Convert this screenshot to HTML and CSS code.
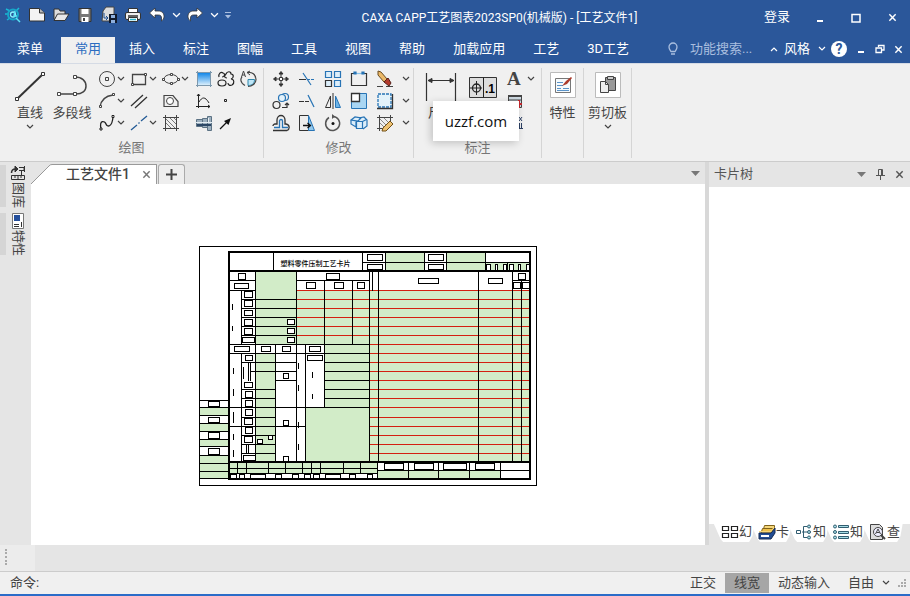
FILE: index.html
```html
<!DOCTYPE html>
<html lang="zh-CN">
  <head>
    <meta charset="UTF-8" />
    <title>CAXA CAPP工艺图表2023SP0(机械版)</title>
    <link rel="stylesheet" href="styles.css">
  </head>
  <body>
    <svg class="defs" aria-hidden="true">
      <symbol id="chev" viewBox="0 0 8 8"><path d="M1 2l3 3 3-3" fill="none" stroke="currentColor" stroke-width="1.200" /></symbol>
      <symbol id="cross" viewBox="0 0 10 10"><path d="M1.500 1.500l7 7M8.500 1.500l-7 7" fill="none" stroke="currentColor" stroke-width="1.600" /></symbol>
    </svg>

    <!-- Title bar -->
    <header class="titlebar">
      <div class="quick">
        <button class="q" aria-label="CAXA"><svg width="18" height="18" viewBox="0 0 18 18" fill="none"><path d="M2 3l4 2M1 8l3 0M3 14l3-2M15 2l-3 3" stroke="#19b9d6" stroke-width="1.500" /><circle cx="9" cy="8.500" r="5" stroke="#17a7c9" stroke-width="2" /><circle cx="9" cy="8.500" r="2.500" stroke="#8af4ff" stroke-width="1.300" /><path d="M12 12l4 4M11 5l-1 5 3 0" stroke="#5be3f5" stroke-width="1.500" /></svg></button>
        <button class="q" aria-label="新建"><svg width="18" height="18" viewBox="0 0 18 18"><path d="M1.500 2.500h10l5 4.500v8h-15z" fill="#f4f4f4" stroke="#333" /><path d="M11.500 2.500v4.500h5" fill="#bbb" stroke="#333" /></svg></button>
        <button class="q" aria-label="打开"><svg width="18" height="18" viewBox="0 0 18 18"><path d="M2 13V3h5l1 2h5v3" fill="#ddd" stroke="#333" /><path d="M2 14.500L5.500 8H17l-4 6.500z" fill="#e8e8e8" stroke="#333" /></svg></button>
        <button class="q" aria-label="保存"><svg width="18" height="18" viewBox="0 0 18 18"><path d="M3 2.500h12v13H3z" fill="#777" stroke="#333" /><path d="M5.500 3h7v5h-7zM5.500 11h7v5h-7z" fill="#fff" /><path d="M7 12h2v3H7z" fill="#444" /></svg></button>
        <button class="q" aria-label="另存为"><svg width="18" height="18" viewBox="0 0 18 18"><path d="M3 5l3-4h8v14H2z" fill="#ddd" stroke="#444" /><path d="M4 7v5h4M6 10l2 2-2 2" fill="none" stroke="#1d4e91" /><path d="M9 8h8v9H9z" fill="#101a2c" /><path d="M11 9h4v3h-4zM11 14h4v3h-4z" fill="#8fb0dd" /></svg></button>
        <button class="q" aria-label="打印"><svg width="18" height="18" viewBox="0 0 18 18"><path d="M4.500 7V2.500h9V7" fill="#fff" stroke="#333" /><rect x="1.500" y="6.500" width="15" height="7" rx="1.500" fill="#eee" stroke="#333" /><path d="M4 10h10" stroke="#333" stroke-width="1.500" /><path d="M4.500 11.500h9v4h-9z" fill="#fff" stroke="#333" /><path d="M6 13.500h6" stroke="#27b3c9" stroke-width="1.500" /></svg></button>
        <button class="q" aria-label="撤销"><svg width="18" height="18" viewBox="0 0 18 18"><path d="M1.500 7L7 2v3h3c4 0 6 2 6 5.500 0 2-1 3.500-2.500 4.500V12c0-2-1-3-3-3H7v3z" fill="#fff" stroke="#333" stroke-width=".8" /></svg></button>
        <button class="drop" aria-label="撤销列表"><svg width="9" height="9"><use href="#chev" /></svg></button>
        <button class="q" aria-label="重做"><svg width="18" height="18" viewBox="0 0 18 18"><path d="M16.500 7L11 2v3H8C4 5 2 7 2 10.500c0 2 1 3.500 2.500 4.500V12c0-2 1-3 3-3H11v3z" fill="#fff" stroke="#333" stroke-width=".8" /></svg></button>
        <button class="drop" aria-label="重做列表"><svg width="9" height="9"><use href="#chev" /></svg></button>
        <button class="drop dim" aria-label="自定义"><svg width="8" height="8" viewBox="0 0 8 8"><path d="M1 1.500h6" stroke="currentColor" /><path d="M1 4h6L4 7.500z" fill="currentColor" /></svg></button>
      </div>
      <h1>CAXA CAPP工艺图表2023SP0(机械版) - [工艺文件1]</h1>
      <div class="window-buttons">
        <button class="login">登录</button>
        <button class="win" aria-label="最小化"><svg width="10" height="10"><path d="M2 8h6" stroke="#fff" stroke-width="2" /></svg></button>
        <button class="win" aria-label="最大化"><svg width="10" height="10"><path d="M1 1.500h8v7.500H1z" fill="none" stroke="#fff" stroke-width="1.500" /></svg></button>
        <button class="win" aria-label="关闭"><svg width="9" height="9"><use href="#cross" /></svg></button>
      </div>
    </header>

    <!-- Ribbon tabs -->
    <nav class="menu">
      <button class="first">菜单</button>
      <button class="active">常用</button>
      <button>插入</button>
      <button>标注</button>
      <button>图幅</button>
      <button>工具</button>
      <button>视图</button>
      <button>帮助</button>
      <button>加载应用</button>
      <button>工艺</button>
      <button>3D工艺</button>
      <div class="menu-right">
        <label class="bulb" for="search"><svg width="12" height="14" viewBox="0 0 12 14" fill="none" stroke="#a9bedf" stroke-width="1.300"><path d="M4 9.500C3 8 2 7 2 5a4 4 0 0 1 8 0c0 2-1 3-2 4.500zM4 12h4" /></svg></label>
        <input id="search" type="text" placeholder="功能搜索..." aria-label="功能搜索" />
        <button class="mini" aria-label="收起"><svg class="up" width="8" height="8"><use href="#chev" /></svg></button>
        <button class="style-btn">风格 <svg width="8" height="8"><use href="#chev" /></svg></button>
        <button class="help" aria-label="帮助">?</button>
        <button class="mini" aria-label="最小化"><svg width="10" height="10"><path d="M2 8h6" stroke="#fff" stroke-width="2" /></svg></button>
        <button class="mini" aria-label="还原"><svg width="10" height="10" fill="none" stroke="#fff" stroke-width="1.300"><path d="M3.500 3V1.500H9V6H7M1 4h5.500v4.500H1z" /></svg></button>
        <button class="mini" aria-label="关闭"><svg width="9" height="9"><use href="#cross" /></svg></button>
      </div>
    </nav>

    <!-- Ribbon -->
    <section class="ribbon">
      <div class="group draw">
        <div class="tools">
          <button class="big"><svg width="34" height="36" viewBox="0 0 34 36"><path d="M4 31L30 6" stroke="#333" stroke-width="2" /><path d="M2.500 29.500h3v3h-3zM28.500 4.500h3v3h-3z" fill="#fff" stroke="#333" /></svg><span>直线</span><svg width="8" height="8"><use href="#chev" /></svg></button>
          <button class="big poly"><svg width="34" height="36" viewBox="0 0 34 36" fill="none" stroke="#444" stroke-width="1.500"><path d="M4 26h17c6 0 10-3 10-8s-4-9-11-9" /><path d="M2.500 24.500h3v3h-3zM18.500 24.500h3v3h-3zM18.500 7.500h3v3h-3z" fill="#fff" stroke-width="1" /></svg><span>多段线</span></button>
          <div class="icons draw-icons">
            <button aria-label="圆"><svg width="18" height="18" viewBox="0 0 18 18" fill="none" stroke="#444"><circle cx="9" cy="9" r="7.500" /><path d="M7.500 7.500h3v3h-3z" /></svg><svg width="8" height="8"><use href="#chev" /></svg></button>
            <button aria-label="矩形"><svg width="18" height="18" viewBox="0 0 18 18" fill="none" stroke="#444"><path d="M2.500 4.500h13v10h-13z" stroke-width="1.300" /><path d="M1.500 13.500h2v2h-2zM14.500 3.500h2v2h-2z" fill="#fff" /></svg><svg width="8" height="8"><use href="#chev" /></svg></button>
            <button aria-label="椭圆"><svg width="18" height="18" viewBox="0 0 18 18" fill="none" stroke="#444"><ellipse cx="9" cy="9" rx="7" ry="4.500" /><path d="M.5 8.500h2v2h-2zM15.500 8.500h2v2h-2zM8.500 3.500h2v2h-2zM8.500 12.500h2v2h-2z" fill="#fff" /></svg><svg width="8" height="8"><use href="#chev" /></svg></button>
            <button aria-label="填充"><svg width="18" height="18" viewBox="0 0 18 18"><defs><linearGradient id="fillg" x2="0" y2="1"><stop stop-color="#1488e8" /><stop offset="1" stop-color="#d9eefb" /></linearGradient></defs><path d="M3 3h12v12H3z" fill="url(#fillg)" /><path d="M1 2.500h16M1 15.500h16M2.500 1v16M15.500 1v16" stroke="#7c98ad" /></svg></button>
            <button aria-label="云线"><svg width="18" height="18" viewBox="0 0 18 18" fill="none" stroke="#222" stroke-width="1.200"><path d="M2 7c-1-3 2-6 4-4 3 1 1 4-1 4M9 4c1-3 5-3 5 0 3 0 3 4 0 5 3 0 4 4 1 6-2 1-4 0-4-2M10 8c-3 0-3-2-1-4" /><ellipse cx="5" cy="13" rx="4" ry="3" /></svg></button>
            <button aria-label="局部放大"><svg width="18" height="18" viewBox="0 0 18 18" fill="none" stroke="#444"><path d="M9 9.500h6.500c0 4-2 6-6.500 6z" fill="#bfe6f7" stroke="#2e88ad" /><path d="M6 15.500C0 12 2 8 3 7M8 2.500c5-1 9 2 9 7 0 4-4 7-8 7" stroke-width="1.200" /><path d="M2.500 7l2-6 2 6M3 5h3M11 1l-3 1.500L11 5" /></svg></button>

            <button aria-label="圆弧"><svg width="18" height="18" viewBox="0 0 18 18" fill="none" stroke="#444"><path d="M2 15C3 8 7 4 15 3" stroke-width="1.300" /><path d="M1.500 13.500h2v2h-2zM14.500 1.500h2v2h-2z" fill="#fff" /></svg><svg width="8" height="8"><use href="#chev" /></svg></button>
            <button aria-label="平行线"><svg width="18" height="18" viewBox="0 0 18 18" stroke="#333" stroke-width="1.300"><path d="M1 14L13 3M5 16L17 5" /></svg></button>
            <button aria-label="孔轴"><svg width="18" height="18" viewBox="0 0 18 18" fill="none" stroke="#444"><path d="M2 3.500h9l5 6v5H2z" stroke-width="1.200" /><circle cx="8" cy="9" r="3.500" fill="#fff" /></svg></button>
            <button aria-label="公式曲线"><svg width="18" height="18" viewBox="0 0 18 18" fill="none" stroke="#222"><path d="M3.500 2v14M1 14.500h14M2 4l1.500-2L5 4M13 13l2 1.500-2 1.500M4 10c3-5 6-6 10 1" /></svg></button>
            <button aria-label="点"><svg width="18" height="18" viewBox="0 0 18 18"><path d="M7.500 7.500h2v2h-2z" fill="none" stroke="#222" /></svg></button>
            <span></span>

            <button aria-label="样条"><svg width="18" height="18" viewBox="0 0 18 18" fill="none" stroke="#222" stroke-width="1.300"><path d="M3 15C1 5 7 7 8 10s6 4 7-7" /><path d="M2 14h2v2H2zM14 1.500h2v2h-2z" fill="#fff" stroke-width="1" /></svg><svg width="8" height="8"><use href="#chev" /></svg></button>
            <button aria-label="中心线"><svg width="18" height="18" viewBox="0 0 18 18" stroke="#245b96" stroke-width="1.300"><path d="M1 16l6-5M11 7l6-5M8.500 9.500l1-1" /></svg><svg width="8" height="8"><use href="#chev" /></svg></button>
            <button aria-label="剖面线"><svg width="18" height="18" viewBox="0 0 18 18" fill="none" stroke="#444"><path d="M1 3.500h16M1 14.500h16M3.500 1v16M14.500 1v16" /><path d="M4 5l9 9M4 9l5 5M8 4l6 6M12 4l2 2" stroke="#777" /></svg></button>
            <button aria-label="轴"><svg width="18" height="18" viewBox="0 0 18 18"><path d="M1.500 5.500h6v7h-6zM7.500 4.500h5v9h-5zM12.500 2.500h4v14h-4z" fill="#9db0bf" stroke="#5c7284" /><path d="M0 8.500h18M13.500 4v4" stroke="#e4ecf2" /><path d="M2 11h14" stroke="#2c4766" stroke-width="2" /></svg></button>
            <button aria-label="箭头"><svg width="18" height="18" viewBox="0 0 18 18"><path d="M3 15l7-7" stroke="#111" stroke-width="1.300" /><path d="M14 4l-2.500 7L7 7z" fill="#111" /></svg></button>
          </div>
        </div>
        <h2>绘图</h2>
      </div>

      <div class="group modify">
        <div class="tools">
          <div class="icons mod-icons">
            <button aria-label="平移"><svg width="18" height="18" viewBox="0 0 18 18" fill="#333" stroke="#333"><path d="M9 1.500l2 2.500H7zM9 16.500l2-2.500H7zM1.500 9L4 7v4zM16.500 9L14 7v4z" /><path d="M9 4v3M9 11v3M4 9h3M11 9h3" /><path d="M7.500 7.500h3v3h-3z" fill="#fff" /></svg></button>
            <button aria-label="裁剪"><svg width="18" height="18" viewBox="0 0 18 18" stroke="#2874b5"><path d="M1 9.500h7" stroke="#333" /><path d="M9 9.500h8" stroke-dasharray="3 1" /><path d="M5 3l8 12" stroke-width="1.200" /></svg></button>
            <button aria-label="阵列"><svg width="18" height="18" viewBox="0 0 18 18" fill="#dceefa" stroke="#2874b5" stroke-width="1.200"><path d="M1.500 1.500h6v6h-6zM10.500 1.500h6v6h-6zM10.500 10.500h6v6h-6z" /><path d="M1.500 10.500h6v6h-6z" stroke="#333" /></svg></button>
            <button aria-label="打断"><svg width="18" height="18" viewBox="0 0 18 18" fill="none" stroke="#333" stroke-width="1.200"><path d="M5 3.500H1.500v12h15v-12H13" /><path d="M5 3.500h8" stroke="#8cc4e8" /><path d="M4 2h2v2H4zM12 2h2v2h-2z" fill="#2874b5" stroke="#2874b5" /></svg></button>
            <button aria-label="删除"><svg width="18" height="18" viewBox="0 0 18 18"><path d="M2 1l3 1 6 7-3 3-6-7z" fill="#ecb968" stroke="#6b4c20" /><path d="M8 12l4-4 3 5-2 3z" fill="#b43b2d" stroke="#55201a" /><path d="M1 16.500h6M10 16.500h7" stroke="#444" /></svg></button>
            <button aria-label="更多"><svg width="8" height="8"><use href="#chev" /></svg></button>

            <button aria-label="复制"><svg width="18" height="18" viewBox="0 0 18 18" fill="none" stroke="#2874b5" stroke-width="1.200"><circle cx="13" cy="5" r="3.500" /><circle cx="10" cy="6" r="3.500" fill="#e3f2fb" /><circle cx="4.500" cy="13" r="3.500" stroke="#333" /><path d="M10 15.500h5v-4M13 13l2-2 2 2" stroke="#333" /></svg></button>
            <button aria-label="延伸"><svg width="18" height="18" viewBox="0 0 18 18" stroke="#333"><path d="M1 9.500h5M7 9.500h4" /><path d="M10 3l6 12" stroke="#2874b5" stroke-width="1.300" /></svg></button>
            <button aria-label="镜像"><svg width="18" height="18" viewBox="0 0 18 18" fill="none" stroke="#333"><path d="M6.500 4v11.500H1.500z" /><path d="M11.500 4v11.500h5z" fill="#6cb4e8" stroke="#2874b5" /><path d="M9 1v16" /></svg></button>
            <button aria-label="缩放"><svg width="18" height="18" viewBox="0 0 18 18"><path d="M1.500 1.500h15v15h-15z" fill="#a9d6f3" stroke="#2874b5" /><path d="M1.500 1.500h8v8h-8z" fill="#fff" stroke="#333" stroke-width="1.300" /></svg></button>
            <button aria-label="拉伸"><svg width="18" height="18" viewBox="0 0 18 18"><path d="M2 2h13v13H2z" fill="#e3f2fa" stroke="#2874b5" stroke-width="1.300" stroke-dasharray="3 1" /><path d="M1 16.500h15.500V2" fill="none" stroke="#333" stroke-width="1.300" /></svg></button>
            <button aria-label="更多"><svg width="8" height="8"><use href="#chev" /></svg></button>

            <button aria-label="等距"><svg width="18" height="18" viewBox="0 0 18 18" fill="none" stroke-width="1.300"><path d="M2 13.500h5.500V7c0-2 3-2 3 0v6.500H16" stroke="#2874b5" /><path d="M1 16.500h14c3-1 3-6-1-6.500h-1V6c0-6-8-6-8 0v4H3c-1 0-2 1-2 2" stroke="#333" /></svg></button>
            <button aria-label="移动到"><svg width="18" height="18" viewBox="0 0 18 18"><path d="M1.500 1.500h9v15h-9z" fill="#eee" stroke="#333" /><path d="M10.500 1.500l6 15h-6z" fill="#91c8ed" stroke="#2874b5" /><path d="M5 11.500h7M9.500 9l3 2.500-3 2.500" fill="none" stroke="#111" stroke-width="1.300" /></svg></button>
            <button aria-label="旋转"><svg width="18" height="18" viewBox="0 0 18 18" fill="none" stroke="#555" stroke-width="1.500"><path d="M9 2.500A7 7 0 1 1 5 3.500" /><path d="M8 0l3 2.500L8 5z" fill="#555" stroke="none" /><circle cx="9" cy="9.500" r="1.500" fill="#111" stroke="none" /></svg></button>
            <button aria-label="三维"><svg width="18" height="18" viewBox="0 0 18 18" fill="#dceefa" stroke="#2874b5" stroke-width="1.200"><path d="M1 6l4-3 6 1-3 3zM1 6v4l5 3V7M9 4l5-1 3 3v6l-4 3" /><path d="M6.500 7.500h6v7h-6zM12.500 7.500l4-2" /></svg></button>
            <button aria-label="编辑填充"><svg width="18" height="18" viewBox="0 0 18 18" fill="none" stroke="#444"><path d="M1 3.500h16M3.500 1v16M1 14.500h8M14.500 1v6" /><path d="M4 5l7 7M4 9l5 5M8 4l4 4" stroke="#888" /><path d="M7 14l7-7 3 3-7 7-4 0z" fill="#edc273" stroke="#725017" /></svg></button>
            <button aria-label="更多"><svg width="8" height="8"><use href="#chev" /></svg></button>
          </div>
        </div>
        <h2>修改</h2>
      </div>

      <div class="group note">
        <div class="tools">
          <button class="big"><svg width="34" height="36" viewBox="0 0 34 36" fill="none" stroke="#333"><path d="M2.500 5v28M31.500 5v28" stroke-width="1.200" /><path d="M4 12.500h26M8 10.500l-4 2 4 2zM26 10.500l4 2-4 2z" fill="#333" /></svg><span>尺寸</span></button>
          <button class="big"><svg width="30" height="36" viewBox="0 0 30 36"><path d="M1.500 9.500h27v20h-27z" fill="#ddd" stroke="#333" /><path d="M15.500 9.500v20M2 20h12M8.500 13v14" stroke="#222" /><circle cx="8.500" cy="20" r="4" fill="none" stroke="#222" stroke-width="1.300" /><text x="17" y="25" class="tol">.1</text></svg></button>
          <div class="side">
            <button class="text-btn">A <svg width="8" height="8"><use href="#chev" /></svg></button>
            <button aria-label="表格"><svg width="16" height="16" viewBox="0 0 16 16"><path d="M1.500 2.500h13v12h-13zM1 7h14M1 10.500h14" fill="#ccd8e0" stroke="#444" /><path d="M1 3h14" stroke="#444" stroke-width="2" /><path d="M11 7h2v3h2v2h-2v3h-2z" fill="#c3272d" /></svg></button>
            <button aria-label="序号"><svg width="16" height="16" viewBox="0 0 16 16" stroke="#2b3f63" fill="none"><path d="M12 2l3 4M15 2l-3 4M12.500 8v5M14.500 8v5M9 13.500h7" /></svg></button>
          </div>
        </div>
        <h2>标注</h2>
        <div class="tip">uzzf.com</div>
      </div>

      <div class="group single">
        <button class="big"><svg width="28" height="36" viewBox="0 0 28 36"><path d="M1.500 4.500h25v25h-25z" fill="#fff" stroke="#bbb" /><path d="M6.500 10.500h15v14h-15z" fill="#f6fafc" stroke="#777" /><path d="M8 14.500h6M8 17.500h6M8 20.500h4M14 20.500h6M8 22.500h12" stroke="#5a93c8" /><path d="M13 18l4-5 5-4 1 1-5 6z" fill="#ab3b2c" /></svg><span>特性</span></button>
      </div>
      <div class="group single clip">
        <button class="big"><svg width="28" height="36" viewBox="0 0 28 36"><path d="M1.500 4.500h25v25h-25z" fill="#fff" stroke="#bbb" /><path d="M11.500 9.500h10v13h-10z" fill="#999" stroke="#444" /><path d="M13.500 8.500h6v3h-6z" fill="#ccc" stroke="#444" /><path d="M6.500 13.500h5l3 3v8h-8z" fill="#eee" stroke="#444" /><path d="M11.500 13.500v3h3" fill="none" stroke="#444" /></svg><span>剪切板</span><svg width="8" height="8"><use href="#chev" /></svg></button>
      </div>
    </section>

    <main class="workspace">
      <aside class="dock">
        <button><svg width="16" height="16" viewBox="0 0 16 16" fill="none" stroke="#333"><path d="M1.500 10.500h13v4h-13zM5 11v2M8 11v3M11 11v2" /><path d="M1.500 8c0-3 1-4 4-4" stroke-width="1.500" /><path d="M5 1l3 3-3 3z" fill="#333" /><path d="M9 2.500h5v3H9M11.500 6v4M14.500 1v6" /></svg><span>图库</span></button>
        <button><svg width="12" height="16" viewBox="0 0 12 16"><path d="M.5.5h11v15H.5z" fill="#fff" stroke="#777" /><path d="M2 2h6v6H2z" fill="#244f9c" /><path d="M2 11.500h5M2 13.500h5M9.500 9v5" stroke="#333" /></svg><span>特性</span></button>
      </aside>

      <section class="document">
        <div class="doc-tabs">
          <div class="doc-tab">
            <svg class="slope" width="21" height="20" viewBox="0 0 21 20"><path d="M0 20L18 2q1-1.500 3-1.500V20z" fill="#fff" /><path d="M0 20L18 2q1-1.500 3-1.500" fill="none" stroke="#999" /></svg>
            <div class="doc-name"><span>工艺文件1</span><button aria-label="关闭文件"><svg width="9" height="9"><use href="#cross" /></svg></button></div>
          </div>
          <button class="add" aria-label="新建文件"><svg width="13" height="13"><path d="M6.500 1v11M1 6.500h11" stroke="#444" stroke-width="2" /></svg></button>
          <button class="list" aria-label="文件列表"><svg width="9" height="6"><path d="M0 0h9L4.500 5z" fill="#777" /></svg></button>
        </div>
        <div class="canvas">
          <svg class="card" width="338" height="240" viewBox="198.500 245.500 338 240" role="img" aria-label="塑料零件压制工艺卡片">
            <!-- fill areas -->
            <path class="green" d="M385 252h39v19h-39zM446 252h39v19h-39zM485 262h45v9h-45zM255 271h41v73h-41zM296 290h234v54H296zM369 344h161v117H369zM324 344h45v63h-45zM255 353h20v108h-20zM305 407h64v54h-64zM199 407h29v8h-29zM199 423h29v8h-29zM199 439h29v7h-29zM199 455h29v23h-29zM228 461h149v12H228zM377 470h123v8H377z" />
            <!-- red rules -->
            <path class="red" d="M296 290H530M296 299H530M296 308H530M296 317H530M296 326H530M296 335H530M369 344H530M369 353H530M369 362H530M369 371H530M369 380H530M369 389H530M369 398H530M369 407H530M369 417H530M369 426H530M369 435H530M369 444H530M369 453H530" />
            <!-- header -->
            <path class="ln" d="M273 252V271M362 252V271M385 252V271M424 252V271M446 252V271M485 252V271M507 262V271M362 262H530M255 271V461M296 271V461M228 280H255M296 280H369M228 290H255M324 280V407M352 280V344M369 271V461M372 271V290M378 271V461M478 271V461M512 271V461M521 280V461M512 280H530" />
            <!-- left part -->
            <path class="ln" d="M241 290V344M241 353V461M241 299H296M241 308H296M241 317H296M241 326H296M241 335H296M228 344H369M228 353H369M275 344V461M305 344V461M241 362H296M324 362H369M250 371H296M324 371H369M275 380H296M324 380H369M241 389H275M324 389H369M241 398H275M324 398H369M228 407H369M241 417H275M228 426H305M241 435H275M241 444H275M241 453H275" />
            <path class="ln" d="M232 303V309M232 325V330M233 367V373M233 388V395M233 411V422M233 433V439M233 449V456M298 362V368M298 384V390M298 421V427M298 443V449M312 371V377M312 393V398M243 366V378M248 362V380M250 362V380M246 444V453M248 444V453" />
            <path class="ln" d="M199 400H228M199 407H228M199 415H228M199 423H228M199 431H228M199 439H228M199 446H228M199 455H228M199 463H228M199 471H228M199 478H228" />
            <!-- bottom rows -->
            <path class="ln" d="M228 468H377M228 473H377M237 461V473M246 461V473M268 461V473M285 461V473M302 461V473M311 461V473M320 461V473M343 461V473M360 461V473M377 461V478M377 470H530M408 461V478M438 461V478M469 461V478M500 461V478" />
            <!-- label boxes -->
            <path class="box" d="M367 254h15v6h-15zM367 264h15v5h-15zM428 254h15v6h-15zM428 264h15v5h-15zM486 264h4v6h-4zM495 264h2v6h-2zM503 264h3v6h-3zM509 264h4v6h-4zM518 264h2v6h-2zM526 264h3v6h-3zM238 273h7v6h-7zM234 283h14v5h-14zM326 273h13v6h-13zM306 282h9v6h-9zM334 282h9v6h-9zM357 282h7v6h-7zM418 278h20v5h-20zM488 278h14v5h-14zM518 273h7v6h-7zM513 282h7v6h-7zM522 282h7v6h-7z" />
            <path class="box" d="M244 291h8v6h-8zM244 300h8v6h-8zM244 310h8v5h-8zM244 319h8v6h-8zM244 328h8v6h-8zM242 337h12v5h-12zM287 319h7v5h-7zM287 328h7v5h-7zM287 337h7v5h-7zM234 346h15v5h-15zM261 346h9v5h-9zM282 346h8v5h-8zM309 346h11v5h-11zM307 355h15v5h-15zM245 355h7v5h-7zM244 382h8v5h-8zM245 391h7v6h-7zM245 400h7v6h-7zM245 409h7v6h-7zM244 418h8v6h-8zM245 427h7v6h-7zM244 436h8v6h-8zM243 455h12v5h-12zM283 373h5v5h-5zM283 420h5v5h-5zM283 456h5v5h-5zM257 439h5v4h-5zM268 435h4v4h-4z" />
            <path class="box" d="M208 401h11v5h-11zM208 417h11v5h-11zM208 432h11v6h-11zM208 448h11v6h-11zM228 473h149v5H228zM230 474h6v4h-6zM239 474h5v4h-5zM250 474h15v4h-15zM275 474h6v4h-6zM292 474h6v4h-6zM304 474h6v4h-6zM313 474h6v4h-6zM325 474h15v4h-15zM349 474h6v4h-6zM367 474h5v4h-5zM384 463h19v6h-19zM414 463h19v6h-19zM443 463h23v6h-23zM475 463h19v6h-19z" />
            <path class="thick" d="M228.500 251.500H529.500V478.500H228.500zM228.500 270.500H529.500M228.500 461.500H529.500" />
            <path class="ln" d="M199 246H536V485H199z" />
            <text x="280" y="265" class="card-title">塑料零件压制工艺卡片</text>
          </svg>
        </div>
      </section>

      <aside class="tree">
        <div class="tree-head">
          <h3>卡片树</h3>
          <button aria-label="菜单"><svg width="9" height="6"><path d="M0 0h9L4.500 5z" fill="#777" /></svg></button>
          <button aria-label="固定"><svg width="9" height="11" fill="none" stroke="#555"><path d="M2.500 6V.5h4V6M0 6.500h9M4.500 7v4M5.500 1v5" /></svg></button>
          <button aria-label="关闭"><svg width="9" height="9"><use href="#cross" /></svg></button>
        </div>
        <div class="tree-body"></div>
        <div class="tree-tabs">
          <button><svg width="18" height="14" viewBox="0 0 18 14" fill="none" stroke="#222" stroke-width="1.200"><path d="M1.500 1.500h6v4h-6zM10.500 1.500h6v4h-6zM1.500 8.500h6v4h-6zM10.500 8.500h6v4h-6z" /></svg><span>幻</span></button>
          <button><svg width="18" height="16" viewBox="0 0 18 16" stroke="#80631a"><path d="M6.500 1.500h10v7h-12z" fill="#f4d67a" /><path d="M4.500 4.500h10v6h-12z" fill="#efc04a" /><path d="M1 9h12l4-5v5l-4 6H1z" fill="#234d94" stroke="#152a52" /><path d="M1 7.500h12l3-4" fill="none" stroke="#f4d67a" /><path d="M3 11h8v2H3z" fill="#fff" stroke="none" /></svg><span>卡</span></button>
          <button><svg width="18" height="16" viewBox="0 0 18 16" fill="none" stroke="#315d70"><path d="M1.500 6.500h4v3h-4zM12 2.500H8.500v11H12M7 8h5" /><circle cx="14" cy="2.500" r="1.500" fill="#a6dce5" /><circle cx="14" cy="8" r="1.500" fill="#a6dce5" /><circle cx="14" cy="13.500" r="1.500" fill="#a6dce5" /></svg><span>知</span></button>
          <button><svg width="18" height="16" viewBox="0 0 18 16" fill="#a6dce5" stroke="#315d70"><path d="M6.500 1.500h10v2h-10zM6.500 7.500h10v2h-10zM6.500 12.500h10v2h-10z" /><circle cx="3" cy="2.500" r="1.500" /><circle cx="3" cy="8" r="1.500" /><circle cx="3" cy="13.500" r="1.500" /></svg><span>知</span></button>
          <button><svg width="18" height="16" viewBox="0 0 18 16" fill="none" stroke="#444"><path d="M1.500.5h9l3 3v12h-12z" fill="#ddd" /><circle cx="9" cy="8" r="4.500" fill="#eef" /><path d="M12 11l4 4" stroke-width="2" /><path d="M6.500 10L9 5l2.500 5M7.500 8.500h3" /></svg><span>查</span></button>
        </div>
      </aside>
    </main>

    <div class="lower-bar"><div class="grip"></div></div>

    <footer class="status">
      <label for="command">命令:</label>
      <input id="command" type="text" />
      <button>正交</button>
      <button class="on">线宽</button>
      <button>动态输入</button>
      <button class="free">自由 <svg width="8" height="8"><use href="#chev" /></svg></button>
      <svg width="10" height="10" fill="#aaa"><path d="M7 1h2v2H7zM4 4h2v2H4zM7 4h2v2H7zM1 7h2v2H1zM4 7h2v2H4zM7 7h2v2H7z" /></svg>
    </footer>
  </body>
</html>
```

FILE: styles.css
```css
* {
  box-sizing: border-box;
}
body {
  margin: 0;
  height: 100vh;
  display: flex;
  flex-direction: column;
  overflow: hidden;
  font-family: Roboto, "Noto Sans CJK SC", sans-serif;
  font-size: 13px;
  line-height: 18px;
  color: #444444;
  background-color: #e5e5e5;
}
h1,
h2,
h3 {
  margin: 0;
  font-weight: normal;
  font-size: 13px;
}
button,
input {
  font: inherit;
  color: inherit;
  background: none;
  border: none;
  padding: 0;
  margin: 0;
}
button {
  display: flex;
  align-items: center;
  justify-content: center;
  white-space: nowrap;
}
svg {
  display: block;
  flex: none;
}
.defs {
  position: absolute;
  width: 0;
  height: 0;
}

/* title bar */
.titlebar {
  display: flex;
  align-items: center;
  flex: none;
  height: 35px;
  background-color: #2b579a;
  color: #ffffff;
}
.quick {
  display: flex;
  padding-left: 1px;
  height: 30px;
  align-self: flex-start;
}
.q {
  width: 24px;
}
.drop {
  width: 14px;
}
.dim {
  color: #a9bedf;
}
.titlebar h1 {
  flex: 1;
  text-align: center;
  font-size: 12px;
  white-space: nowrap;
}
.window-buttons {
  display: flex;
}
.login {
  margin-right: 12px;
  padding-bottom: 2px;
}
.win {
  width: 36px;
}

/* tabs */
.menu {
  display: flex;
  flex: none;
  height: 29px;
  padding: 2px 0 0 3px;
  background-color: #2b579a;
  border-bottom: 1px solid #d5dbe5;
  color: #ffffff;
}
.menu > button {
  padding: 0 14px 2px;
}
.menu .first {
  margin-right: 4px;
}
.menu .active {
  background-color: #f0f0f0;
  color: #2b6cc0;
}
.menu-right {
  display: flex;
  flex: 1;
  align-items: center;
  justify-content: flex-end;
  padding: 0 2px 2px 0;
}
.bulb {
  margin-right: 11px;
}
#search {
  width: 75px;
}
#search::placeholder {
  color: #a9bedf;
  opacity: 1;
}
.mini {
  width: 19px;
}
.up {
  transform: rotate(180deg);
}
.style-btn {
  gap: 8px;
  margin-right: 5px;
}
.help {
  width: 16px;
  height: 16px;
  margin-right: 4px;
  border-radius: 50%;
  background-color: #ffffff;
  color: #2b579a;
  font-size: 14px;
  font-weight: bold;
}

/* ribbon */
.ribbon {
  display: flex;
  flex: none;
  height: 98px;
  padding: 4px 0 3px;
  background-color: #f0f0f0;
  border-bottom: 1px solid #cccccc;
}
.group {
  position: relative;
  display: flex;
  flex-direction: column;
  justify-content: space-between;
  border-right: 1px solid #d5d5d5;
}
.group h2 {
  text-align: center;
  color: #777777;
  line-height: 20px;
}
.tools {
  display: flex;
}
.draw {
  width: 264px;
}
.draw .tools {
  padding-left: 11px;
}
.modify {
  width: 150px;
}
.modify .tools {
  padding-left: 8px;
}
.note {
  width: 128px;
}
.note .tools {
  padding-left: 8px;
}
.single {
  width: 42px;
}
.clip {
  width: 48px;
}
.big {
  flex-direction: column;
  justify-content: flex-start;
  width: 38px;
}
.big span {
  height: 18px;
  margin-bottom: 1px;
}
.single .big {
  width: auto;
}
.poly {
  width: 46px;
}
.icons {
  display: grid;
  grid-auto-rows: 22px;
}
.icons button {
  justify-content: flex-start;
  gap: 1px;
}
.draw-icons {
  grid-template-columns: 32px 32px 33px 22px 22px 20px;
  margin-left: 3px;
}
.mod-icons {
  grid-template-columns: 26px 26px 26px 26px 26px 10px;
}
.note .big:first-child {
  margin-right: 4px;
}
.tol {
  font: bold 12px "Liberation Sans", sans-serif;
}
.side {
  display: grid;
  grid-auto-rows: 22px;
  justify-items: start;
  padding-left: 5px;
}
.text-btn {
  gap: 6px;
  font: bold 19px "Liberation Serif", serif;
}
.tip {
  position: absolute;
  left: 19px;
  top: 33px;
  width: 86px;
  height: 40px;
  background-color: #ffffff;
  box-shadow: -2px 2px 8px rgba(0, 0, 0, 0.2);
  color: #111111;
  font-family: "Open Sans", sans-serif;
  font-size: 15px;
  line-height: 40px;
  text-align: center;
}

/* work area */
.workspace {
  display: flex;
  flex: 1;
  min-height: 0;
}
.dock {
  width: 30px;
  margin-right: 1px;
  padding-top: 3px;
  display: flex;
  flex-direction: column;
  gap: 6px;
}
.dock button {
  flex-direction: column;
  justify-content: flex-start;
  gap: 1px;
  height: 42px;
  border-left: 6px solid #d5d5d5;
}
.dock span {
  writing-mode: vertical-rl;
  text-orientation: sideways;
  line-height: 16px;
}
.document {
  flex: 1;
  display: flex;
  flex-direction: column;
}
.doc-tabs {
  display: flex;
  height: 22px;
  padding-top: 2px;
}
.doc-tab {
  display: flex;
}
.doc-name {
  display: flex;
  width: 105px;
  padding: 0 5px 0 14px;
  justify-content: space-between;
  align-items: center;
  background-color: #ffffff;
  border-top: 1px solid #999999;
  border-right: 1px solid #999999;
  font-size: 14px;
  font-weight: 500;
  white-space: nowrap;
}
.doc-name span {
  padding-bottom: 2px;
}
.doc-name button {
  color: #777777;
}
.add {
  width: 27px;
  margin-left: 1px;
  border: 1px solid #aaaaaa;
  border-bottom: none;
  border-radius: 3px 3px 0 0;
  background-color: #eeeeee;
}
.list {
  width: 20px;
  margin-left: auto;
}
.canvas {
  flex: 1;
  padding-top: 62px;
  background-color: #ffffff;
}
.card {
  margin: 0 auto;
  shape-rendering: crispEdges;
}
.green {
  fill: #d2ecc8;
}
.red,
.ln,
.thick {
  fill: none;
  stroke: #000000;
}
.red {
  stroke: #d42010;
}
.box {
  fill: #ffffff;
  stroke: #000000;
}
.thick {
  stroke-width: 2px;
}
.card-title {
  font-size: 7px;
  font-weight: 500;
  fill: #000000;
}

/* card tree */
.tree {
  display: flex;
  flex-direction: column;
  width: 205px;
  border-left: 4px solid #d8d8d8;
}
.tree-head {
  display: flex;
  align-items: center;
  gap: 10px;
  height: 25px;
  padding: 0 6px 0 5px;
  color: #555555;
}
.tree-head h3 {
  margin-right: auto;
  padding-bottom: 2px;
}
.tree-body {
  flex: 1;
  background-color: #ffffff;
}
.tree-tabs {
  display: flex;
  height: 23px;
  padding-left: 4px;
  background: linear-gradient(#ffffff 2px, #e5e5e5 2px);
}
.tree-tabs button {
  width: 42px;
  height: 20px;
  margin-right: -5px;
  justify-content: flex-start;
  padding-left: 8px;
  background-color: #ffffff;
  clip-path: polygon(0 0, 100% 0, 94% 70%, 86% 100%, 24% 100%, 18% 85%);
}

/* bottom */
.lower-bar {
  flex: none;
  height: 26px;
}
.grip {
  width: 35px;
  height: 26px;
  padding: 4px 0 0 5px;
  background-color: #ececec;
}
.grip::before {
  content: "";
  display: block;
  height: 16px;
  border-left: 2px dotted #aaaaaa;
}
.status {
  display: flex;
  align-items: center;
  flex: none;
  height: 25px;
  padding: 0 3px 1px 10px;
  background-color: #f0f0f0;
  border-top: 1px solid #cccccc;
  border-bottom: 2px solid #2b6cc8;
}
.status input {
  flex: 1;
  min-width: 0;
}
.status button {
  height: 20px;
  padding: 0 9px;
}
.status .on {
  background-color: #a6a6a6;
}
.status .free {
  gap: 8px;
  padding-right: 7px;
}
```
